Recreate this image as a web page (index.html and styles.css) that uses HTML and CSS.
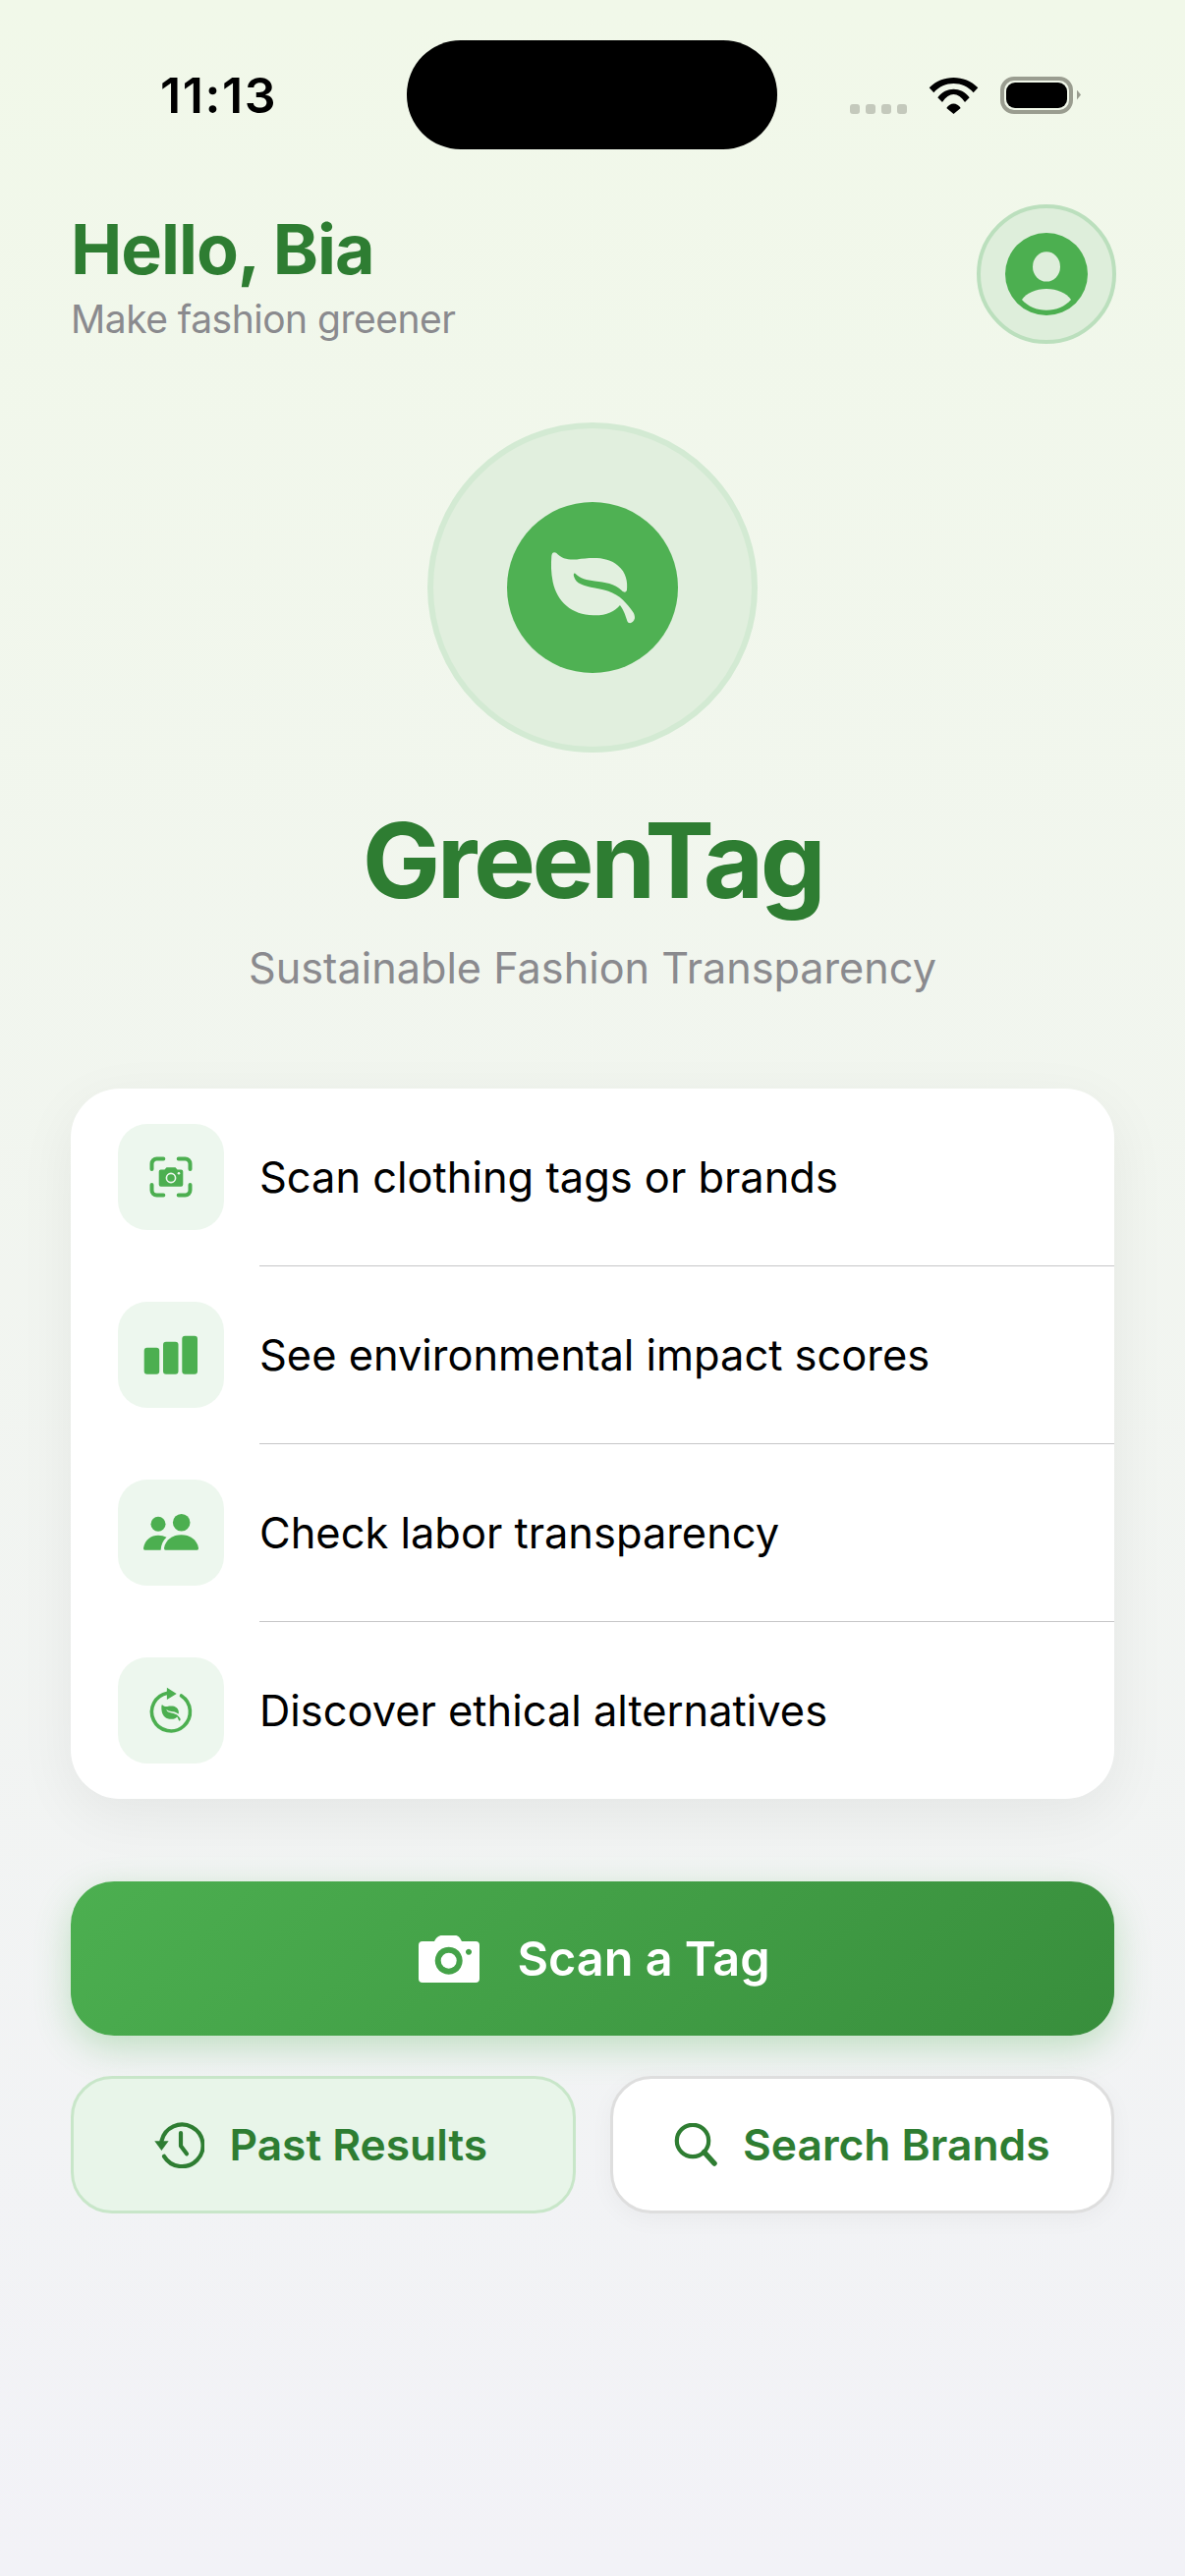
FILE: index.html
```html
<!DOCTYPE html>
<html lang="en">
<head>
    <meta charset="UTF-8">
    <meta name="viewport" content="width=device-width, initial-scale=1.0">
    <title>GreenTag</title>
    <link rel="stylesheet" href="styles.css">
</head>
<body>

<svg class="sprites" aria-hidden="true">
    <symbol id="leaf" viewBox="414 426 260 224">
        <path d="M418 440 Q420 426 432 431 C450 450 470 453 495 451 C540 445 590 442 620 470 C645 490 650 520 647 545 C645 552 638 552 632 546 C610 525 580 520 550 517 C525 514 505 510 490 494 C486 491 484 495 486 503 C492 525 515 532 550 538 C590 545 620 555 645 585 C662 605 672 615 671 630 C668 645 652 650 648 638 C644 625 638 605 626 590 C610 610 585 622 545 621 C480 620 435 580 422 520 C416 490 416 465 418 440 Z"/>
    </symbol>
</svg>

<div class="status-bar">
    <span class="status-time">11:13</span>
    <div class="island"></div>
    <div class="status-icons">
        <div class="signal-dots"><i></i><i></i><i></i><i></i></div>
        <svg class="wifi" viewBox="0 0 51 38">
            <path d="M0.7 11.3 C14 -2.5 37 -2.5 50.3 11.3 L45.7 16.3 C35 4 16 4 5.3 16.3 Z"/>
            <path d="M9.3 21.3 C18 10 33 10 41.7 21.3 L37 26 C30 15.3 21 15.3 14 26 Z"/>
            <path d="M18.3 32 C22 26 29 26 32.7 32 L25.5 38 Z"/>
        </svg>
        <div class="battery">
            <div class="battery-body"><div class="battery-level"></div></div>
            <div class="battery-cap"></div>
        </div>
    </div>
</div>

<header class="top-header">
    <div class="greeting">
        <h1 class="greeting-title">Hello, Bia</h1>
        <p class="greeting-sub">Make fashion greener</p>
    </div>
    <div class="avatar">
        <svg class="avatar-icon" viewBox="0 0 84 84">
            <circle cx="42" cy="42" r="42" fill="#4caf50"/>
            <ellipse cx="42" cy="34.4" rx="14" ry="15.2" fill="#deeedb"/>
            <path d="M17 68 C22 61 31 57 42 57 C53 57 62 61 67 68 C61 75 52 78.7 42 78.7 C32 78.7 23 75 17 68 Z" fill="#deeedb"/>
        </svg>
    </div>
</header>

<section class="hero">
    <div class="logo-ring">
        <div class="logo-disc">
            <svg class="logo-leaf"><use href="#leaf"/></svg>
        </div>
    </div>
    <h2 class="hero-title">GreenTag</h2>
    <p class="hero-sub">Sustainable Fashion Transparency</p>
</section>

<ul class="feature-card">
    <li class="feature-row">
        <div class="feature-icon">
            <svg viewBox="0 0 60 60">
                <path class="corner" d="M22.3 11.5 H15.5 a5 5 0 0 0 -5 5 V22 M37.7 11.5 H44.5 a5 5 0 0 1 5 5 V22 M22.3 48.5 H15.5 a5 5 0 0 1 -5 -5 V38 M37.7 48.5 H44.5 a5 5 0 0 0 5 -5 V38"/>
                <path d="M20 22.6 H23.5 L25.5 20.3 H34.5 L36.5 22.6 H40.3 a2 2 0 0 1 2 2 V37.7 a2 2 0 0 1 -2 2 H19.7 a2 2 0 0 1 -2 -2 V24.6 a2 2 0 0 1 2 -2 Z"/>
                <circle class="lens" cx="30" cy="31" r="4.6"/>
                <circle class="flash" cx="38" cy="26.3" r="1.3"/>
            </svg>
        </div>
        <span class="feature-text">Scan clothing tags or brands</span>
    </li>
    <li class="feature-row">
        <div class="feature-icon">
            <svg viewBox="0 0 60 60">
                <rect x="2.7" y="22.7" width="15.5" height="27" rx="3"/>
                <rect x="22" y="16.7" width="15.5" height="33" rx="3"/>
                <rect x="41.3" y="10.7" width="15.7" height="39" rx="3"/>
            </svg>
        </div>
        <span class="feature-text">See environmental impact scores</span>
    </li>
    <li class="feature-row">
        <div class="feature-icon">
            <svg viewBox="0 0 60 60">
                <circle cx="17" cy="21.3" r="7.5"/>
                <circle cx="40.7" cy="19.7" r="8.8"/>
                <path d="M23 45.7 C24.5 37 32 32.3 40.5 32.3 C49 32.3 56.5 37 58 45.7 Q58.3 47.7 56.5 47.7 H24.5 Q22.7 47.7 23 45.7 Z"/>
                <path d="M2 45.7 C3.5 37 10 32.7 17 32.7 C20 32.7 23 33.4 25.5 34.7 C22 38 20 42 19.6 47.7 H3.5 Q1.7 47.7 2 45.7 Z"/>
            </svg>
        </div>
        <span class="feature-text">Check labor transparency</span>
    </li>
    <li class="feature-row">
        <div class="feature-icon">
            <svg viewBox="0 0 60 60">
                <path class="ring" d="M40.5 15 A19.5 19.5 0 1 1 26.5 12.2"/>
                <path d="M25.9 6.7 L35.7 13 L25.9 19 Z"/>
                <use href="#leaf" x="20" y="24" width="20" height="17"/>
            </svg>
        </div>
        <span class="feature-text">Discover ethical alternatives</span>
    </li>
</ul>

<button class="scan-button">
    <svg class="scan-camera" viewBox="0 0 62 48">
        <path fill-rule="evenodd" d="M4 6 H16 C18 2.5 20 0 24 0 H37 C41 0 42 2.5 44 6 H58 a4 4 0 0 1 4 4 V44 a4 4 0 0 1 -4 4 H4 a4 4 0 0 1 -4 -4 V10 a4 4 0 0 1 4 -4 Z M30.7 11.7 a14 14 0 1 0 0.01 0 Z M51 13.7 a3 3 0 1 0 0.01 0 Z"/>
        <circle cx="30.7" cy="25.7" r="8"/>
    </svg>
    <span>Scan a Tag</span>
</button>

<div class="secondary-actions">
    <button class="action-button action-past">
        <svg class="history-icon" viewBox="0 0 51 48">
            <path class="stroke-line" d="M10 35.8 A21.3 21.3 0 1 0 7.5 20"/>
            <path d="M0.3 20.3 H14.6 L7.4 30 Z"/>
            <path class="stroke-line" d="M27 12 V25.3 L33 33.3"/>
        </svg>
        <span>Past Results</span>
    </button>
    <button class="action-button action-search">
        <svg class="search-icon" viewBox="0 0 45 44">
            <circle class="stroke-line" cx="19" cy="18" r="16.2"/>
            <path class="stroke-handle" d="M30.6 29.5 L41 41"/>
        </svg>
        <span>Search Brands</span>
    </button>
</div>

</body>
</html>
```

FILE: styles.css
```css
* {
    box-sizing: border-box;
}

html,
body {
    margin: 0;
    padding: 0;
}

body {
    width: 1206px;
    height: 2622px;
    overflow: hidden;
    font-family: "Inter", "Liberation Sans", sans-serif;
    background: linear-gradient(180deg, #f1f8e9 0%, #f2f2f7 100%);
}

.sprites {
    display: none;
}

/* Status bar */
.status-bar {
    display: grid;
    grid-template-columns: 414px 377px 1fr;
    align-items: center;
    height: 152px;
    padding-top: 41px;
}

.status-time {
    padding-left: 163px;
    font-size: 50px;
    font-weight: 600;
    letter-spacing: 1.6px;
    color: #000;
}

.island {
    height: 111px;
    background: #000;
    border-radius: 55px;
}

.status-icons {
    display: flex;
    align-items: flex-end;
    height: 38px;
    padding-left: 74px;
}

.signal-dots {
    display: flex;
    gap: 6px;
    margin-right: 22px;
}

.signal-dots i {
    display: block;
    width: 10px;
    height: 10px;
    background: #c4c9bc;
    border-radius: 3px;
}

.wifi {
    width: 51px;
    height: 38px;
    margin-right: 22px;
}

.battery {
    display: flex;
    align-items: center;
    height: 38px;
}

.battery-body {
    width: 74px;
    height: 38px;
    padding: 2px;
    border: 4px solid #9a9d90;
    border-radius: 14px;
}

.battery-level {
    height: 100%;
    background: #000;
    border-radius: 9px;
}

.battery-cap {
    width: 4px;
    height: 10px;
    margin-left: 4px;
    background: #9a9d90;
    clip-path: polygon(0 0, 100% 50%, 0 100%);
}

/* Greeting */
.top-header {
    display: flex;
    justify-content: space-between;
    align-items: flex-start;
    margin-top: 56px;
    padding: 0 70px 0 72px;
}

.greeting {
    padding-top: 4px;
}

.greeting-title {
    margin: 0;
    font-size: 70px;
    line-height: 84px;
    font-weight: 700;
    letter-spacing: -1px;
    color: #2e7d32;
}

.greeting-sub {
    margin: 5px 0 0;
    font-size: 39px;
    line-height: 48px;
    letter-spacing: -0.5px;
    color: #8a8a8e;
}

.avatar {
    display: flex;
    align-items: center;
    justify-content: center;
    width: 142px;
    height: 142px;
    background: #deeedb;
    border: 4px solid #bbdfbd;
    border-radius: 50%;
}

.avatar-icon {
    width: 84px;
    height: 84px;
}

/* Logo and title */
.hero {
    display: flex;
    flex-direction: column;
    align-items: center;
    margin-top: 80px;
}

.logo-ring {
    display: flex;
    align-items: center;
    justify-content: center;
    width: 336px;
    height: 336px;
    background: #e1efde;
    border: 6px solid #d3ead3;
    border-radius: 50%;
}

.logo-disc {
    display: flex;
    align-items: center;
    justify-content: center;
    width: 174px;
    height: 174px;
    background: #4fb153;
    border-radius: 50%;
}

.logo-leaf {
    width: 87px;
    height: 75px;
    fill: #e2f0df;
}

.hero-title {
    margin: 50px 0 0;
    font-size: 106px;
    line-height: 120px;
    font-weight: 700;
    letter-spacing: -3.5px;
    color: #2e7d32;
}

.hero-sub {
    margin: 23px 0 0;
    font-size: 43.2px;
    line-height: 52px;
    color: #8a8a8e;
}

/* Feature list */
.feature-card {
    margin: 97px 72px 0;
    padding: 0;
    list-style: none;
    background: #fff;
    border-radius: 50px;
    box-shadow: 0 16px 60px rgba(0, 0, 0, 0.06);
}

.feature-row {
    position: relative;
    display: flex;
    align-items: center;
    gap: 36px;
    padding: 36px 48px;
}

.feature-row + .feature-row {
    margin-top: 1px;
}

.feature-row + .feature-row::before {
    content: "";
    position: absolute;
    top: -1px;
    left: 192px;
    right: 0;
    height: 1px;
    background: #c6c6c8;
}

.feature-icon {
    display: flex;
    align-items: center;
    justify-content: center;
    flex: none;
    width: 108px;
    height: 108px;
    background: #edf7ee;
    border-radius: 30px;
}

.feature-icon svg {
    width: 60px;
    height: 60px;
    fill: #4caf50;
}

.feature-icon .corner,
.feature-icon .ring {
    fill: none;
    stroke: #4caf50;
    stroke-linecap: round;
}

.feature-icon .corner {
    stroke-width: 4;
}

.feature-icon .ring {
    stroke-width: 3.6;
}

.feature-icon .lens {
    fill: #4caf50;
    stroke: #edf7ee;
    stroke-width: 1.6;
}

.feature-icon .flash {
    fill: #edf7ee;
}

.feature-text {
    font-size: 43.4px;
    color: #000;
}

/* Buttons */
.scan-button {
    display: flex;
    align-items: center;
    justify-content: center;
    gap: 38px;
    width: 1062px;
    height: 157px;
    margin: 84px 72px 0;
    padding: 0 0 0 4px;
    font-family: inherit;
    font-size: 48.6px;
    font-weight: 600;
    color: #fff;
    background: linear-gradient(135deg, #4caf50, #388e3c);
    border: none;
    border-radius: 44px;
    box-shadow: 0 12px 36px rgba(76, 175, 80, 0.3);
}

.scan-camera {
    width: 62px;
    height: 48px;
    fill: #fff;
}

.secondary-actions {
    display: grid;
    grid-template-columns: 1fr 1fr;
    gap: 35px;
    margin: 41px 72px 0;
}

.action-button {
    display: flex;
    align-items: center;
    justify-content: center;
    gap: 25px;
    height: 140px;
    padding: 0;
    font-family: inherit;
    font-size: 44.3px;
    font-weight: 600;
    color: #2e7d32;
    border-radius: 42px;
}

.action-past {
    padding-right: 4px;
    background: #e8f5e9;
    border: 3px solid #c8e6c9;
}

.action-search {
    background: #fff;
    border: 3px solid #dedede;
    box-shadow: 0 6px 24px rgba(0, 0, 0, 0.04);
}

.history-icon {
    width: 51px;
    height: 48px;
    fill: #2e7d32;
}

.search-icon {
    width: 45px;
    height: 44px;
}

.stroke-line {
    fill: none;
    stroke: #2e7d32;
    stroke-width: 4.2;
    stroke-linecap: round;
    stroke-linejoin: round;
}

.stroke-handle {
    fill: none;
    stroke: #2e7d32;
    stroke-width: 5.5;
    stroke-linecap: round;
}
```
